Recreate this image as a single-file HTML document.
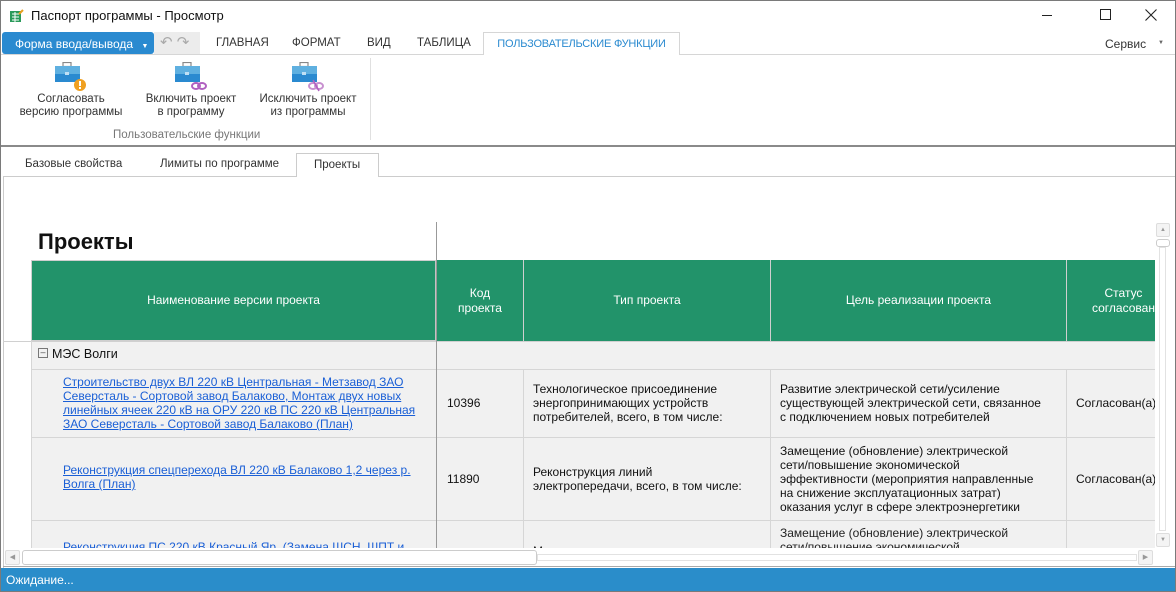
<!DOCTYPE html>
<html><head><meta charset="utf-8"><style>
*{box-sizing:border-box;margin:0;padding:0}
body{width:1176px;height:592px;position:relative;overflow:hidden;background:#fff;font-family:"Liberation Sans","DejaVu Sans",sans-serif;font-size:12px;color:#222}
.a{position:absolute}
.tab{position:absolute;top:37px;font-size:11.5px;color:#333;white-space:nowrap}
.hd{position:absolute;top:260px;height:81px;background:#22936a;color:#fff;display:flex;align-items:center;justify-content:center;text-align:center;font-size:12px;border-right:1px solid #cfcfcf;line-height:15px}
.c{position:absolute;font-size:12px;line-height:14px;color:#111;display:flex;align-items:center}
.lnk{color:#1a5fd6;text-decoration:underline}
.hl{position:absolute;height:1px;background:#d6d6d6}
.vl{position:absolute;width:1px;background:#d6d6d6}
</style></head><body>
<div class="a" style="left:0;top:0;width:1176px;height:592px;border:1px solid #7a7a7a;pointer-events:none;z-index:9"></div>
<svg class="a" style="left:10px;top:9px" width="14" height="14"><rect x="0" y="2" width="11" height="11" fill="#2a9a5a"/><path d="M2 5h7M2 8h7M2 11h7M5 3v10" stroke="#fff" stroke-width="1"/><path d="M9 5l4-4" stroke="#e8a020" stroke-width="2"/></svg>
<div class="a" style="left:31px;top:8px;font-size:13px;color:#111">Паспорт программы - Просмотр</div>
<div class="a" style="left:1042px;top:15px;width:10px;height:1px;background:#222"></div>
<div class="a" style="left:1100px;top:9px;width:11px;height:11px;border:1px solid #222"></div>
<svg class="a" style="left:1145px;top:9px" width="12" height="12"><path d="M0.5 0.5L11.5 11.5M11.5 0.5L0.5 11.5" stroke="#222" stroke-width="1.1"/></svg>
<div class="a" style="left:2px;top:32px;width:152px;height:22px;background:#2a8ad0;border-radius:3px;color:#fff;font-size:12px;padding:5px 0 0 13px;white-space:nowrap">Форма ввода/вывода <span style="font-size:7px;margin-left:5px">▼</span></div>
<div class="a" style="left:154px;top:32px;width:46px;height:22px;background:#ececec;color:#aaa;font-size:15px;padding:1px 0 0 6px">↶ ↷</div>
<div class="tab" style="left:216px">ГЛАВНАЯ</div>
<div class="tab" style="left:292px">ФОРМАТ</div>
<div class="tab" style="left:367px">ВИД</div>
<div class="tab" style="left:417px">ТАБЛИЦА</div>
<div class="a" style="left:483px;top:32px;width:197px;height:23px;border:1px solid #d6d6d6;border-bottom:none;background:#fff;z-index:2;color:#2a8ad0;font-size:11px;padding:5px 0 0 0;text-align:center;white-space:nowrap;letter-spacing:-0.2px">ПОЛЬЗОВАТЕЛЬСКИЕ ФУНКЦИИ</div>
<div class="a" style="left:1105px;top:37px;font-size:12px;color:#333">Сервис</div>
<div class="a" style="left:1158px;top:40px;font-size:6px;color:#666">▼</div>
<div class="a" style="left:0;top:54px;width:1176px;height:1px;background:#d6d6d6"></div>
<svg class="a" style="left:55px;top:62px" width="40" height="32"><rect x="8" y="0.5" width="8" height="4" fill="none" stroke="#888" stroke-width="1.2"/><rect x="0" y="4" width="25" height="16" fill="#2a8ad0"/><rect x="0" y="4" width="25" height="8" fill="#5fb0e0"/><rect x="10" y="10" width="4" height="3" fill="#bfe0f5"/><circle cx="25" cy="23" r="6" fill="#f0a020"/><rect x="24" y="19" width="2" height="5" fill="#fff"/><rect x="24" y="25" width="2" height="2" fill="#fff"/></svg>
<svg class="a" style="left:175px;top:62px" width="40" height="32"><rect x="8" y="0.5" width="8" height="4" fill="none" stroke="#888" stroke-width="1.2"/><rect x="0" y="4" width="25" height="16" fill="#2a8ad0"/><rect x="0" y="4" width="25" height="8" fill="#5fb0e0"/><rect x="10" y="10" width="4" height="3" fill="#bfe0f5"/><ellipse cx="21" cy="24" rx="4" ry="3" fill="#fff" stroke="#b060c0" stroke-width="2"/><ellipse cx="27" cy="24" rx="4" ry="3" fill="none" stroke="#b060c0" stroke-width="2"/></svg>
<svg class="a" style="left:292px;top:62px" width="40" height="32"><rect x="8" y="0.5" width="8" height="4" fill="none" stroke="#888" stroke-width="1.2"/><rect x="0" y="4" width="25" height="16" fill="#2a8ad0"/><rect x="0" y="4" width="25" height="8" fill="#5fb0e0"/><rect x="10" y="10" width="4" height="3" fill="#bfe0f5"/><ellipse cx="21" cy="24" rx="4" ry="3" fill="#fff" stroke="#c890d0" stroke-width="2"/><ellipse cx="27" cy="24" rx="4" ry="3" fill="none" stroke="#c890d0" stroke-width="2"/><path d="M21 18l6 11" stroke="#b060c0" stroke-width="1.5"/></svg>
<div class="a" style="left:10px;top:93px;width:122px;text-align:center;line-height:13px;font-size:11.5px;color:#333">Согласовать<br>версию программы</div>
<div class="a" style="left:135px;top:93px;width:112px;text-align:center;line-height:13px;font-size:11.5px;color:#333">Включить проект<br>в программу</div>
<div class="a" style="left:252px;top:93px;width:112px;text-align:center;line-height:13px;font-size:11.5px;color:#333">Исключить проект<br>из программы</div>
<div class="a" style="left:113px;top:129px;font-size:11.5px;color:#777">Пользовательские функции</div>
<div class="a" style="left:370px;top:58px;width:1px;height:82px;background:#e0e0e0"></div>
<div class="a" style="left:0;top:145px;width:1176px;height:2px;background:#8a8a8a"></div>
<div class="a" style="left:25px;top:158px;font-size:11.5px;color:#333">Базовые свойства</div>
<div class="a" style="left:160px;top:158px;font-size:11.5px;color:#333">Лимиты по программе</div>
<div class="a" style="left:296px;top:153px;width:83px;height:24px;border:1px solid #ccc;border-bottom:none;background:#fff;z-index:2;font-size:11.5px;padding:5px 0 0 17px;color:#333">Проекты</div>
<div class="a" style="left:3px;top:176px;width:1172px;height:1px;background:#ccc"></div>
<div class="a" style="left:3px;top:176px;width:1px;height:392px;background:#ccc"></div>
<div class="a" style="left:38px;top:229px;font-size:22px;font-weight:bold;color:#111">Проекты</div>
<div class="a" style="left:4px;top:341px;width:1151px;height:207px;background:#f1f1f1"></div>
<div class="a" style="left:4px;top:342px;width:27px;height:206px;background:#fff"></div>
<div class="hd" style="left:31px;width:406px;border:1px solid #cfcfcf;border-right:2px solid #c4c4c4">Наименование версии проекта</div>
<div class="hd" style="left:437px;width:87px">Код<br>проекта</div>
<div class="hd" style="left:524px;width:247px">Тип проекта</div>
<div class="hd" style="left:771px;width:296px">Цель реализации проекта</div>
<div class="hd" style="left:1067px;width:88px;border-right:none;justify-content:flex-start;padding-left:25px;overflow:hidden;white-space:nowrap">Статус<br>согласован</div>
<div class="a" style="left:3px;top:341px;width:1152px;height:1px;background:#d0d0d0"></div>
<div class="hl" style="left:31px;top:369px;width:1124px"></div>
<div class="hl" style="left:31px;top:437px;width:1124px"></div>
<div class="hl" style="left:31px;top:520px;width:1124px"></div>
<div class="vl" style="left:31px;top:341px;height:207px"></div>
<div class="vl" style="left:523px;top:369px;height:179px"></div>
<div class="vl" style="left:770px;top:369px;height:179px"></div>
<div class="vl" style="left:1066px;top:369px;height:179px"></div>
<div class="a" style="left:436px;top:222px;width:1px;height:326px;background:#999"></div>
<div class="a" style="left:38px;top:348px;width:10px;height:10px;border:1px solid #777;font-size:9px;line-height:7px;text-align:center;color:#444">–</div>
<div class="a" style="left:52px;top:347px;font-size:12.5px;color:#111">МЭС Волги</div>
<div class="c lnk" style="left:63px;top:373px;width:366px;height:60px">Строительство двух ВЛ 220 кВ Центральная - Метзавод ЗАО Северсталь - Сортовой завод Балаково, Монтаж двух новых линейных ячеек 220 кВ на ОРУ 220 кВ ПС 220 кВ Центральная ЗАО Северсталь - Сортовой завод Балаково (План)</div>
<div class="c" style="left:447px;top:369px;height:68px">10396</div>
<div class="c" style="left:533px;top:369px;width:215px;height:68px">Технологическое присоединение энергопринимающих устройств потребителей, всего, в том числе:</div>
<div class="c" style="left:780px;top:369px;width:284px;height:68px">Развитие электрической сети/усиление<br>существующей электрической сети, связанное<br>с подключением новых потребителей</div>
<div class="c" style="left:1076px;top:369px;height:68px;white-space:nowrap">Согласован(а)</div>
<div class="c lnk" style="left:63px;top:437px;width:366px;height:80px">Реконструкция спецперехода ВЛ 220 кВ Балаково 1,2 через р. Волга (План)</div>
<div class="c" style="left:447px;top:437px;height:83px">11890</div>
<div class="c" style="left:533px;top:437px;width:215px;height:83px">Реконструкция линий<br>электропередачи, всего, в том числе:</div>
<div class="c" style="left:780px;top:437px;width:280px;height:83px">Замещение (обновление) электрической<br>сети/повышение экономической<br>эффективности (мероприятия направленные<br>на снижение эксплуатационных затрат)<br>оказания услуг в сфере электроэнергетики</div>
<div class="c" style="left:1076px;top:437px;height:83px;white-space:nowrap">Согласован(а)</div>
<div class="a" style="left:3px;top:520px;width:1152px;height:28px;overflow:hidden">
<div class="a lnk" style="left:60px;top:20px;white-space:nowrap">Реконструкция ПС 220 кВ Красный Яр. (Замена ШСН, ШПТ и</div>
<div class="a" style="left:777px;top:6px;line-height:14px;white-space:nowrap">Замещение (обновление) электрической<br>сети/повышение экономической</div>
<div class="a" style="left:530px;top:24px">М</div>
</div>
<div class="a" style="left:1155px;top:222px;width:16px;height:327px;background:#fff"></div>
<div class="a" style="left:1156px;top:223px;width:14px;height:14px;border:1px solid #ddd;border-radius:2px;background:#f4f4f4;font-size:6px;color:#999;text-align:center;line-height:12px">▲</div>
<div class="a" style="left:1156px;top:239px;width:14px;height:8px;border:1px solid #ccc;border-radius:3px"></div>
<div class="a" style="left:1159px;top:247px;width:7px;height:284px;border:1px solid #e2e2e2"></div>
<div class="a" style="left:1156px;top:533px;width:14px;height:14px;border:1px solid #ddd;border-radius:2px;background:#f4f4f4;font-size:6px;color:#999;text-align:center;line-height:12px">▼</div>
<div class="a" style="left:4px;top:549px;width:1151px;height:18px;background:#fff"></div>
<div class="a" style="left:5px;top:550px;width:15px;height:15px;border:1px solid #ddd;border-radius:2px;background:#f4f4f4;font-size:7px;color:#999;text-align:center;line-height:13px">◀</div>
<div class="a" style="left:22px;top:550px;width:515px;height:15px;border:1px solid #ccc;border-radius:3px"></div>
<div class="a" style="left:537px;top:554px;width:600px;height:7px;border:1px solid #e2e2e2"></div>
<div class="a" style="left:1138px;top:550px;width:15px;height:15px;border:1px solid #ddd;border-radius:2px;background:#f4f4f4;font-size:7px;color:#999;text-align:center;line-height:13px">▶</div>
<div class="a" style="left:3px;top:566px;width:1172px;height:1px;background:#aaa"></div>
<div class="a" style="left:0;top:568px;width:1176px;height:24px;background:#2a8dca;color:#fff;font-size:12px;padding:5px 0 0 6px">Ожидание...</div>
</body></html>
